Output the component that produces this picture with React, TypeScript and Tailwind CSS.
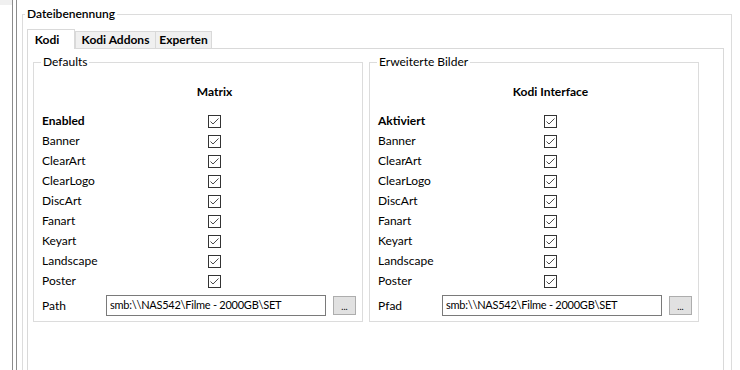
type Row = { label: string; bold?: boolean };

const defaultsRows: Row[] = [
  { label: 'Enabled', bold: true },
  { label: 'Banner' },
  { label: 'ClearArt' },
  { label: 'ClearLogo' },
  { label: 'DiscArt' },
  { label: 'Fanart' },
  { label: 'Keyart' },
  { label: 'Landscape' },
  { label: 'Poster' },
];

const extendedRows: Row[] = [
  { label: 'Aktiviert', bold: true },
  ...defaultsRows.slice(1),
];

function CheckBox() {
  return (
    <svg width="13" height="13" viewBox="0 0 13 13" className="block shrink-0">
      <rect x="0.5" y="0.5" width="12" height="12" fill="#ffffff" stroke="#333333" />
      <path d="M2.5 6.5 L5 9 L10.5 3.5" fill="none" stroke="#4a4a4a" strokeWidth="1" />
    </svg>
  );
}

type GroupProps = {
  title: string;
  header: string;
  rows: Row[];
  pathLabel: string;
};

function ImageGroup({ title, header, rows, pathLabel }: GroupProps) {
  return (
    <fieldset className="w-[330px] border border-[#dcdcdc] pl-[8px] pr-[5px] pt-[12px] pb-[5px]">
      <legend className="ml-[-1px] px-[2px] leading-[16px]">{title}</legend>

      <div className="flex h-[20px] items-center">
        <div className="w-[166px]" />
        <div className="flex w-[13px] justify-center whitespace-nowrap font-bold">{header}</div>
      </div>

      <div className="mt-[9px]">
        {rows.map((r) => (
          <div key={r.label} className="flex h-[20px] items-center">
            <span className={r.bold ? 'w-[166px] font-bold' : 'w-[166px]'}>{r.label}</span>
            <CheckBox />
          </div>
        ))}
      </div>

      <div className="mt-[4px] flex h-[21px] items-center">
        <span className="w-[64px]">{pathLabel}</span>
        <div className="flex h-[21px] w-[220px] items-center border border-[#7a7a7a] pl-[3px] text-[11px] tracking-[-0.25px] whitespace-nowrap">
          smb:\\NAS542\Filme - 2000GB\SET
        </div>
        <button
          type="button"
          className="ml-[7px] flex h-[19px] w-[23px] items-center justify-center border border-[#adadad] bg-[#e1e1e1] pt-[2px] text-[9px] leading-none"
        >
          ...
        </button>
      </div>
    </fieldset>
  );
}

export default function App() {
  return (
    <div className="flex h-[370px] w-[740px] overflow-hidden bg-white font-['Lato','Noto_Sans',sans-serif] text-[12px] text-black">
      <div className="w-[12px] shrink-0">
        <div className="h-[5px] bg-[#f0f0f0]" />
      </div>
      <div className="h-full w-[5px] shrink-0 border-x border-x-[#8c8c8c]" />

      <fieldset className="mt-[6px] ml-[5px] h-[420px] w-[710px] shrink-0 border border-[#dcdcdc] pl-[4px] pr-[7px] pt-[7px]">
        <legend className="ml-[-2px] px-[2px] leading-[16px] font-semibold">Dateibenennung</legend>

        <div className="flex h-[19px] items-end">
          <div className="relative z-10 -mb-px flex h-[20px] w-[48px] items-start justify-center border-x border-t border-[#d9d9d9] bg-white pt-[1px] pr-[8px] font-bold">
            Kodi
          </div>
          <div className="flex h-[17px] w-[81px] items-center justify-center border border-b-0 border-[#d9d9d9] bg-[#f0f0f0] font-bold">
            Kodi Addons
          </div>
          <div className="-ml-px flex h-[17px] w-[57px] items-center justify-center border border-b-0 border-[#d9d9d9] bg-[#f0f0f0] font-bold">
            Experten
          </div>
        </div>

        <div className="flex h-[360px] items-start gap-[6px] border border-[#d9d9d9] pl-[5px] pt-[5px]">
          <ImageGroup title="Defaults" header="Matrix" rows={defaultsRows} pathLabel="Path" />
          <ImageGroup title="Erweiterte Bilder" header="Kodi Interface" rows={extendedRows} pathLabel="Pfad" />
        </div>
      </fieldset>
    </div>
  );
}
